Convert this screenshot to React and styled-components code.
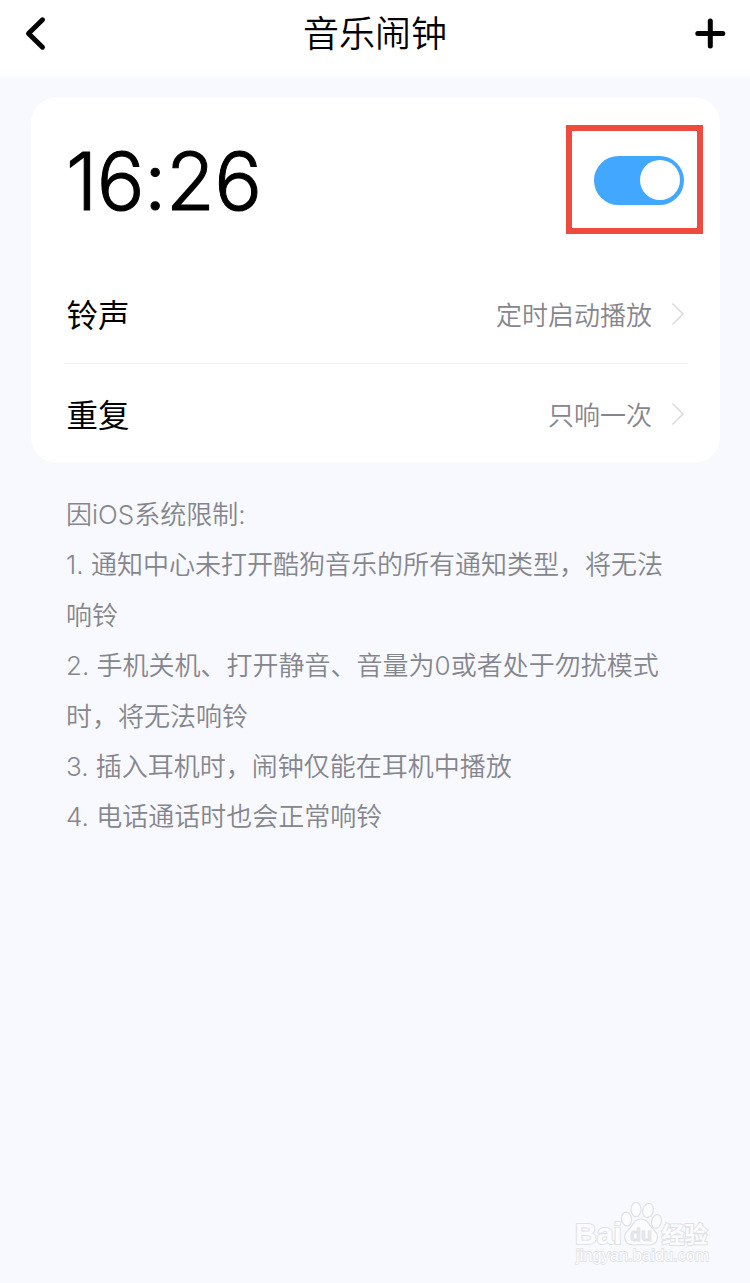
import React, { useState } from 'react';
import styled, { createGlobalStyle } from 'styled-components';

const GlobalStyle = createGlobalStyle`
  body {
    margin: 0;
    background-color: #f8f9fe;
  }
`;

const Page = styled.div`
  position: relative;
  box-sizing: border-box;
  width: 750px;
  height: 1283px;
  overflow: hidden;
  color: #000;
  background-color: #f8f9fe;
  font-family: Inter, 'Noto Sans CJK SC', sans-serif;
`;

const Header = styled.header`
  display: grid;
  grid-template-columns: 1fr auto 1fr;
  align-items: center;
  box-sizing: border-box;
  height: 80px;
  padding: 0 24px 13px;
  background: linear-gradient(#fff 60px, #fdfeff 75px, #f8f9fe 79px);
`;

const Title = styled.h1`
  margin: 0;
  padding-top: 2px;
  font-size: 36px;
  font-weight: 350;
  line-height: 65px;
`;

const IconButton = styled.button`
  display: flex;
  justify-self: ${({ $end }) => $end ? 'end' : 'start'};
  padding: 0;
  border: 0;
  background: none;
`;

const Card = styled.section`
  box-sizing: border-box;
  width: 689px;
  height: 366px;
  margin: 17px 0 0 31px;
  padding: 0 32px 0 33px;
  border-radius: 26px;
  background-color: #fff;
`;

const ClockRow = styled.div`
  display: flex;
  align-items: center;
  justify-content: space-between;
  box-sizing: border-box;
  height: 167px;
  padding-bottom: 2px;
  padding-left: 2px;
`;

const Time = styled.div`
  padding-top: 3px;
  font-size: 79.5px;
  font-weight: 300;
  letter-spacing: -0.5px;
  line-height: 100px;
  -webkit-text-stroke: 1px #000;
`;

const Highlight = styled.div`
  display: flex;
  align-items: center;
  justify-content: center;
  box-sizing: border-box;
  width: 137px;
  height: 109px;
  margin-right: -15px;
  padding-top: 1px;
  border: 6px solid #ee4b3e;
`;

const Switch = styled.button`
  display: flex;
  align-items: center;
  justify-content: ${({ $on }) => $on ? 'flex-end' : 'flex-start'};
  box-sizing: border-box;
  width: 90px;
  height: 49px;
  margin-left: 9px;
  padding: 4px;
  border: 0;
  border-radius: 25px;
  background-color: ${({ $on }) => $on ? '#42a7ff' : '#ddd'};
`;

const Knob = styled.span`
  width: 40px;
  height: 40px;
  border-radius: 50%;
  background-color: #fff;
`;

const SettingRow = styled.div`
  display: flex;
  align-items: center;
  height: 99px;
  padding: 0 3px 0 2px;

  & + & {
    border-top: 1px solid #f0f0f1;
  }
`;

const Label = styled.span`
  flex: 1;
  padding-top: 4px;
  padding-left: 0.5px;
  font-size: 31.5px;
  font-weight: 400;
  line-height: 48px;
`;

const Value = styled.span`
  margin-right: 19px;
  padding-top: 5px;
  color: #85868d;
  font-size: 26px;
  font-weight: 350;
  line-height: 40px;
`;

const Notes = styled.div`
  margin: 27px 66px 0;
  color: #85868d;
  font-size: 26px;
  font-weight: 350;
  line-height: 50.4px;
`;

const Note = styled.p`
  margin: 0;
`;

const Watermark = styled.svg`
  position: absolute;
  right: 32px;
  bottom: 12px;
`;

const SETTINGS = [
  { label: '铃声', value: '定时启动播放' },
  { label: '重复', value: '只响一次' },
];

const NOTES = [
  '因iOS系统限制:',
  '1. 通知中心未打开酷狗音乐的所有通知类型，将无法响铃',
  '2. 手机关机、打开静音、音量为0或者处于勿扰模式时，将无法响铃',
  '3. 插入耳机时，闹钟仅能在耳机中播放',
  '4. 电话通话时也会正常响铃',
];

function BackIcon() {
  return (
    <svg width="24" height="36" viewBox="0 0 24 36" fill="none">
      <path d="M18.5 3.8L4.5 17.5L18.5 31.2" stroke="#000" strokeWidth="5" strokeLinecap="round" strokeLinejoin="round" />
    </svg>
  );
}

function PlusIcon() {
  return (
    <svg width="32" height="32" viewBox="0 0 32 32" fill="none">
      <path d="M16.3 3V28M3.8 15.5H28.8" stroke="#000" strokeWidth="5" strokeLinecap="round" />
    </svg>
  );
}

function Chevron() {
  return (
    <svg width="14" height="24" viewBox="0 0 14 24" fill="none">
      <path d="M1.500 1.500L12 12L1.500 22.500" stroke="#dadadd" strokeWidth="1.500" />
    </svg>
  );
}

function BaiduMark() {
  return (
    <Watermark width="146" height="72" viewBox="0 0 146 72" fill="#fcfcfe" stroke="#e0e1e4" strokeWidth="1.2" fontFamily="'Liberation Sans', 'Noto Sans CJK SC', sans-serif">
      <text x="3" y="45" fontSize="30" fontWeight="700" textLength="47" lengthAdjust="spacingAndGlyphs" strokeWidth="2" paintOrder="stroke">Bai</text>
      <ellipse cx="54.5" cy="20" rx="5" ry="7" transform="rotate(-10 54.5 20)" />
      <ellipse cx="64" cy="10.5" rx="5" ry="7.2" />
      <ellipse cx="76" cy="11.5" rx="5.2" ry="7.2" transform="rotate(14 76 11.5)" />
      <ellipse cx="84.5" cy="22.5" rx="4.8" ry="7" transform="rotate(14 84.5 22.5)" />
      <path d="M69 20C76 20 77 27 83 32C88 38 85 46 77 46C72 45.5 66 45.5 62 46C53 46 50 38 55 32C61 28 61 20 69 20Z" />
      <text x="58" y="42" fontSize="19" fontWeight="700" textLength="22" lengthAdjust="spacingAndGlyphs" fill="#e8e9ed" strokeWidth="0.8">du</text>
      <text x="89.5" y="43.500" fontSize="23" fontWeight="700" textLength="46" strokeWidth="2" paintOrder="stroke">经验</text>
      <text x="4" y="62" fontSize="16" textLength="133" lengthAdjust="spacingAndGlyphs" strokeWidth="1.4" paintOrder="stroke">jingyan.baidu.com</text>
    </Watermark>
  );
}

export default function App() {
  const [enabled, setEnabled] = useState(true);

  return (
    <Page>
      <GlobalStyle />
      <Header>
        <IconButton><BackIcon /></IconButton>
        <Title>音乐闹钟</Title>
        <IconButton $end><PlusIcon /></IconButton>
      </Header>
      <Card>
        <ClockRow>
          <Time>16:26</Time>
          <Highlight>
            <Switch $on={enabled} onClick={() => setEnabled(!enabled)}>
              <Knob />
            </Switch>
          </Highlight>
        </ClockRow>
        {SETTINGS.map(({ label, value }) => (
          <SettingRow key={label}>
            <Label>{label}</Label>
            <Value>{value}</Value>
            <Chevron />
          </SettingRow>
        ))}
      </Card>
      <Notes>
        {NOTES.map(note => <Note key={note}>{note}</Note>)}
      </Notes>
      <BaiduMark />
    </Page>
  );
}
